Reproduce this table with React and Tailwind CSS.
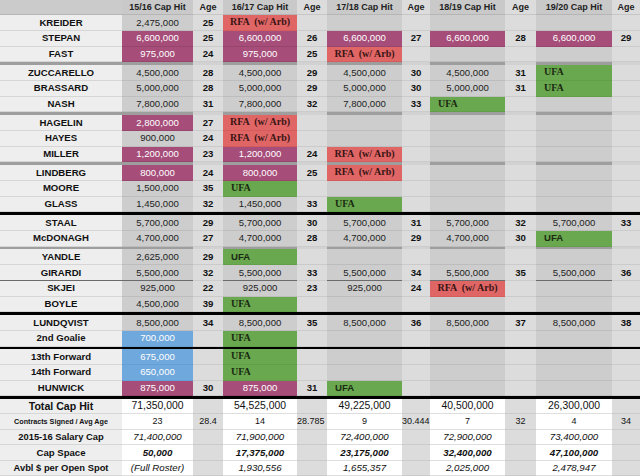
import React from 'react';

const COLS = 'grid grid-cols-[122px_71px_30px_74px_30px_75px_28px_75px_31px_76px_28px]';

// cap cell kinds: n = plain number, p = purple, r = RFA, u = UFA (serif), s = UFA (sans), b = blue, '' = empty
const players = [
  { name: 'KREIDER', cells: [['n', '2,475,000'], '25', ['r'], '', [''], '', [''], '', [''], ''] },
  { name: 'STEPAN', cells: [['p', '6,600,000'], '25', ['p', '6,600,000'], '26', ['p', '6,600,000'], '27', ['p', '6,600,000'], '28', ['p', '6,600,000'], '29'] },
  { name: 'FAST', cells: [['p', '975,000'], '24', ['p', '975,000'], '25', ['r'], '', [''], '', [''], ''], sep: 'gray' },
  { name: 'ZUCCARELLO', cells: [['n', '4,500,000'], '28', ['n', '4,500,000'], '29', ['n', '4,500,000'], '30', ['n', '4,500,000'], '31', ['u'], ''] },
  { name: 'BRASSARD', cells: [['n', '5,000,000'], '28', ['n', '5,000,000'], '29', ['n', '5,000,000'], '30', ['n', '5,000,000'], '31', ['u'], ''] },
  { name: 'NASH', cells: [['n', '7,800,000'], '31', ['n', '7,800,000'], '32', ['n', '7,800,000'], '33', ['u'], '', [''], ''], sep: 'gray' },
  { name: 'HAGELIN', cells: [['p', '2,800,000'], '27', ['r'], '', [''], '', [''], '', [''], ''] },
  { name: 'HAYES', cells: [['n', '900,000'], '24', ['r'], '', [''], '', [''], '', [''], ''] },
  { name: 'MILLER', cells: [['p', '1,200,000'], '23', ['p', '1,200,000'], '24', ['r'], '', [''], '', [''], ''], sep: 'gray' },
  { name: 'LINDBERG', cells: [['p', '800,000'], '24', ['p', '800,000'], '25', ['r'], '', [''], '', [''], ''] },
  { name: 'MOORE', cells: [['n', '1,500,000'], '35', ['u'], '', [''], '', [''], '', [''], ''] },
  { name: 'GLASS', cells: [['n', '1,450,000'], '32', ['n', '1,450,000'], '33', ['u'], '', [''], '', [''], ''], sep: 'black' },
  { name: 'STAAL', cells: [['n', '5,700,000'], '29', ['n', '5,700,000'], '30', ['n', '5,700,000'], '31', ['n', '5,700,000'], '32', ['n', '5,700,000'], '33'] },
  { name: 'McDONAGH', cells: [['n', '4,700,000'], '27', ['n', '4,700,000'], '28', ['n', '4,700,000'], '29', ['n', '4,700,000'], '30', ['s'], ''], sep: 'gray' },
  { name: 'YANDLE', cells: [['n', '2,625,000'], '29', ['s'], '', [''], '', [''], '', [''], ''] },
  { name: 'GIRARDI', cells: [['n', '5,500,000'], '32', ['n', '5,500,000'], '33', ['n', '5,500,000'], '34', ['n', '5,500,000'], '35', ['n', '5,500,000'], '36'], thin: true },
  { name: 'SKJEI', cells: [['n', '925,000'], '22', ['n', '925,000'], '23', ['n', '925,000'], '24', ['r'], '', [''], ''] },
  { name: 'BOYLE', cells: [['n', '4,500,000'], '39', ['u'], '', [''], '', [''], '', [''], ''], sep: 'black' },
  { name: 'LUNDQVIST', cells: [['n', '8,500,000'], '34', ['n', '8,500,000'], '35', ['n', '8,500,000'], '36', ['n', '8,500,000'], '37', ['n', '8,500,000'], '38'] },
  { name: '2nd Goalie', cells: [['b', '700,000'], '', ['u'], '', [''], '', [''], '', [''], ''], sep: 'black' },
  { name: '13th Forward', cells: [['b', '675,000'], '', ['u'], '', [''], '', [''], '', [''], ''] },
  { name: '14th Forward', cells: [['b', '650,000'], '', ['u'], '', [''], '', [''], '', [''], ''] },
  { name: 'HUNWICK', cells: [['p', '875,000'], '30', ['p', '875,000'], '31', ['s'], '', [''], '', [''], ''], sep: 'black' },
];

const summary = [
  { name: 'Total Cap Hit', label: 'text-[10.6px]', val: 'text-[10.4px]', cells: ['71,350,000', '', '54,525,000', '', '49,225,000', '', '40,500,000', '', '26,300,000', ''] },
  { name: 'Contracts Signed / Avg Age', label: 'text-[7.2px]', val: 'text-[9px]', cells: ['23', '28.4', '14', '28.785', '9', '30.444', '7', '32', '4', '34'] },
  { name: '2015-16 Salary Cap', label: 'text-[9.4px]', val: 'text-[9.7px] italic', cells: ['71,400,000', '', '71,900,000', '', '72,400,000', '', '72,900,000', '', '73,400,000', ''] },
  { name: 'Cap Space', label: 'text-[9.6px]', val: 'text-[9.7px] italic font-bold', cells: ['50,000', '', '17,375,000', '', '23,175,000', '', '32,400,000', '', '47,100,000', ''] },
  { name: 'Avbl $ per Open Spot', label: 'text-[9.4px]', val: 'text-[9.7px] italic', cells: ['(Full Roster)', '', '1,930,556', '', '1,655,357', '', '2,025,000', '', '2,478,947', ''] },
];

const capStyle = {
  n: 'bg-[#cdcdcd] text-[#222] justify-center border-[#bdbdbd]',
  '': 'bg-[#cdcdcd] border-[#bdbdbd]',
  p: 'bg-[#a64d79] text-white justify-center border-[#98456e]',
  b: 'bg-[#6fa8dc] text-white justify-center border-[#64a0d6]',
  r: "bg-[#e06666] text-[#3a1414] justify-center font-bold font-['Liberation_Serif',serif] text-[10px] border-[#d45c5c]",
  u: "bg-[#6aa84f] text-[#1a2b12] justify-start pl-[8px] font-bold font-['Liberation_Serif',serif] text-[10px] border-[#639e49]",
  s: 'bg-[#6aa84f] text-[#1a2b12] justify-start pl-[8px] font-bold border-[#639e49]',
};

function CapCell({ kind, value, thin }) {
  const text = kind === 'r' ? 'RFA  (w/ Arb)' : kind === 'u' || kind === 's' ? 'UFA' : value;
  return (
    <div className={`flex items-center whitespace-pre border-b ${capStyle[kind]} ${thin ? 'border-b-[#6b6b6b]' : ''}`}>
      {text}
    </div>
  );
}

function PlayerRow({ row }) {
  return (
    <div className={`${COLS} h-[15.8px] text-[9.6px] leading-none`}>
      <div className={`flex items-center justify-center bg-[#eeeeee] font-bold text-[#111] border-b ${row.thin ? 'border-b-[#6b6b6b]' : 'border-[#d6d6d6]'}`}>
        {row.name}
      </div>
      {row.cells.map((c, i) =>
        i % 2 === 0 ? (
          <CapCell key={i} kind={c[0]} value={c[1]} thin={row.thin} />
        ) : (
          <div key={i} className="flex items-center justify-center bg-[#dcdcdc] font-bold text-[#111] border-b border-[#cbcbcb]">
            {c}
          </div>
        )
      )}
    </div>
  );
}

function Separator({ type }) {
  if (type === 'black') return <div className="h-[2.6px] bg-black" />;
  return (
    <div className={`${COLS} h-[2.6px]`}>
      <div className="bg-[#9e9e9e]" />
      {Array.from({ length: 10 }).map((_, i) => (
        <div key={i} className={i % 2 === 0 ? 'bg-[#9e9e9e]' : 'bg-[#d2d2d2]'} />
      ))}
    </div>
  );
}

export default function App() {
  const heads = ['15/16 Cap Hit', '16/17 Cap Hit', '17/18 Cap Hit', '18/19 Cap Hit', '19/20 Cap Hit'];
  return (
    <div className="w-[640px] h-[476px] overflow-hidden bg-white font-['Liberation_Sans',Arial,sans-serif]">
      <div className={`${COLS} h-[15px] text-[9px] font-bold leading-none text-[#222]`}>
        <div className="bg-[#cbcbcb] border-b border-[#b5b5b5]" />
        {heads.map((h) => (
          <React.Fragment key={h}>
            <div className="flex items-center justify-center bg-[#c9c9c9] border-b border-[#b5b5b5]">{h}</div>
            <div className="flex items-center justify-center bg-[#dcdcdc] border-b border-[#c6c6c6]">Age</div>
          </React.Fragment>
        ))}
      </div>

      {players.map((row) => (
        <React.Fragment key={row.name}>
          <PlayerRow row={row} />
          {row.sep && <Separator type={row.sep} />}
        </React.Fragment>
      ))}

      {summary.map((row) => (
        <div key={row.name} className={`${COLS} h-[15.4px] leading-none text-[#111]`}>
          <div className={`flex items-center justify-center bg-[#eeeeee] font-bold border-b border-[#d6d6d6] whitespace-nowrap ${row.label}`}>
            {row.name}
          </div>
          {row.cells.map((c, i) => (
            <div
              key={i}
              className={`flex items-center border-b whitespace-nowrap overflow-hidden ${row.val} ${
                c.length > 5 && i % 2 === 1 ? 'justify-start' : 'justify-center'
              } ${i % 2 === 0 ? 'bg-white border-[#dedede]' : 'bg-[#dcdcdc] border-[#cbcbcb] font-normal not-italic'}`}
            >
              {c}
            </div>
          ))}
        </div>
      ))}
    </div>
  );
}
